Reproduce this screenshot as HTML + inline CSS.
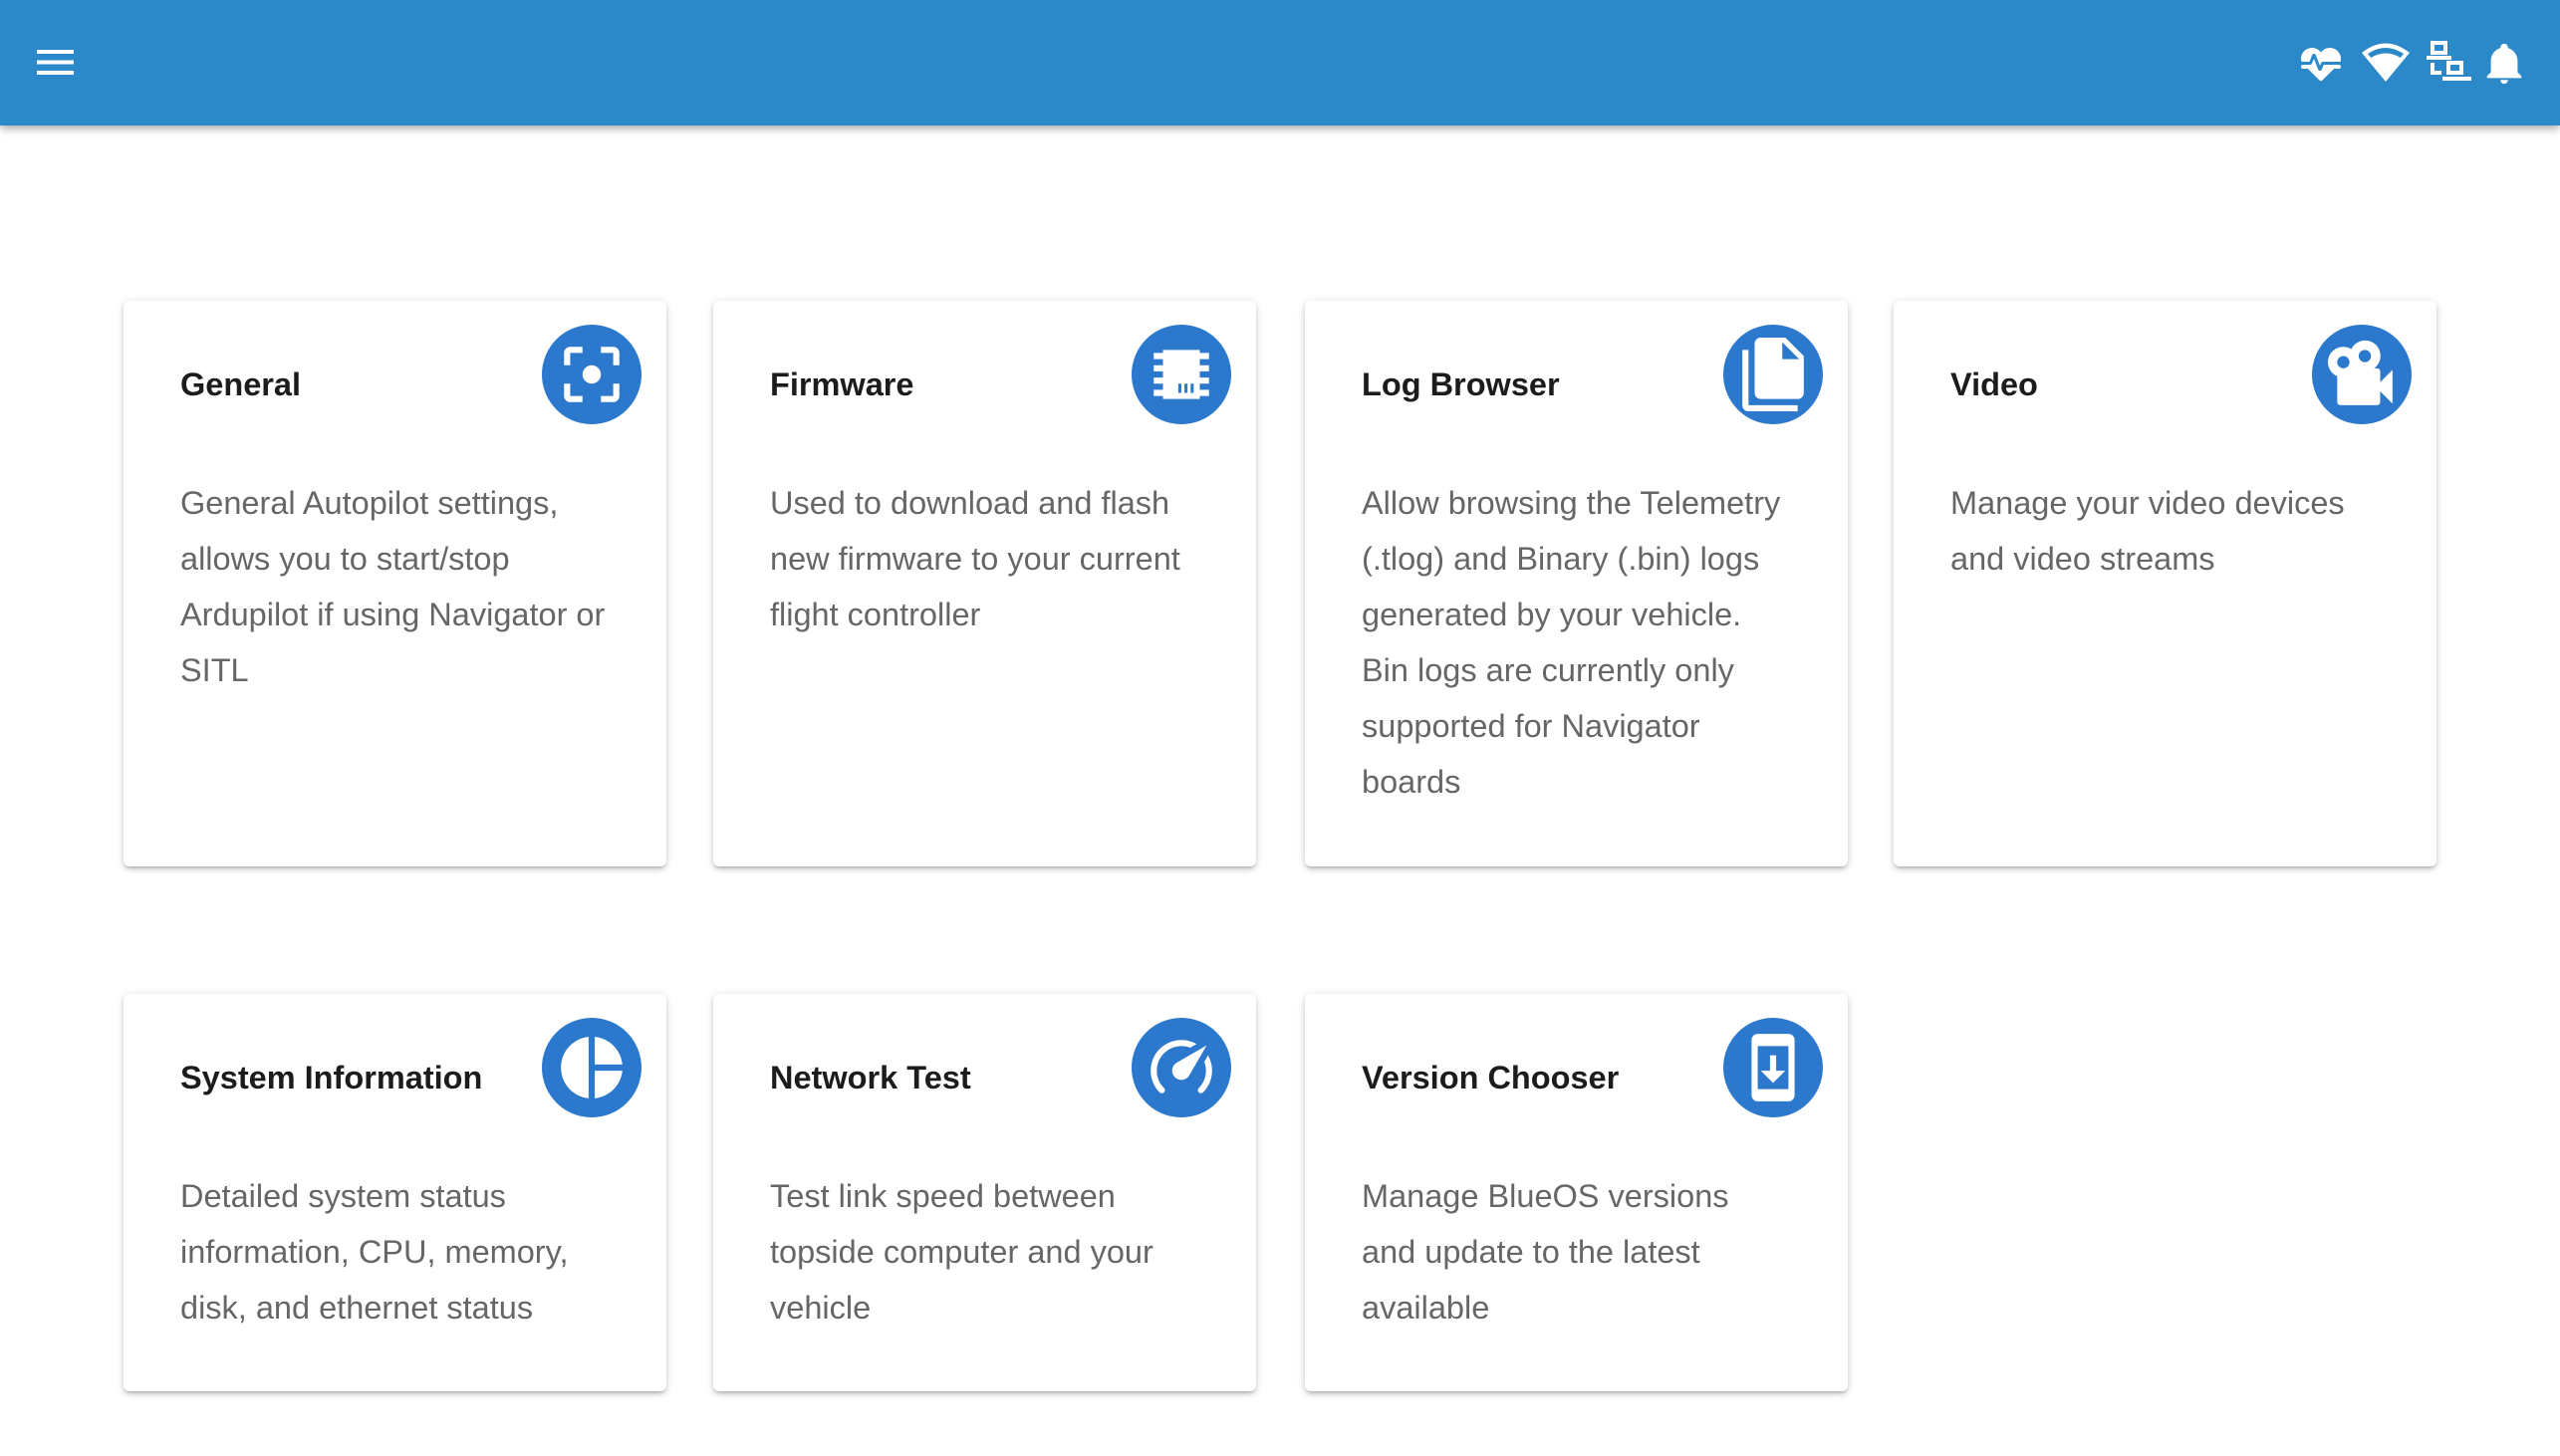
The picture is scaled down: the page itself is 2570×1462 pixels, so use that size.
<!DOCTYPE html>
<html><head><meta charset="utf-8">
<style>
*{margin:0;padding:0;box-sizing:border-box}
html,body{width:2570px;height:1462px;overflow:hidden;background:#fff;font-family:"Liberation Sans",Arial,sans-serif}
.hdr{position:absolute;left:0;top:0;width:2570px;height:126px;background:#2b89c9;box-shadow:0 3px 8px rgba(0,0,0,.35);z-index:2}
.hdr svg{position:absolute;fill:#fff}
.card{position:absolute;width:545px;background:#fff;border-radius:6px;box-shadow:0 3px 3px -2px rgba(0,0,0,.2),0 3px 6px 0 rgba(0,0,0,.14),0 1px 10px 0 rgba(0,0,0,.1)}
.r1{top:302px;height:568px}
.r2{top:998px;height:399px}
.t{position:absolute;left:57px;top:64px;font-size:32.5px;font-weight:bold;color:#1c1c1c;white-space:nowrap;line-height:40px}
.b{position:absolute;left:57px;top:175px;font-size:32.5px;color:#666;line-height:56px;white-space:nowrap}
.ic{position:absolute;left:420px;top:24px;width:100px;height:100px;border-radius:50%;background:#2b78cc}
.ic svg{position:absolute;left:13px;top:13px;width:74px;height:74px;fill:#fff}
</style></head><body>
<div class="hdr">
 <svg style="left:37px;top:50px" width="37" height="25" viewBox="0 0 37 25"><rect x="0" y="0" width="37" height="4"/><rect x="0" y="10.5" width="37" height="4"/><rect x="0" y="21" width="37" height="4"/></svg>
 <svg style="left:2306px;top:40px" width="48" height="48" viewBox="0 0 24 24"><path d="M7.5,4A5.5,5.5 0 0,0 2,9.5C2,10 2.09,10.5 2.22,11H6.3L7.57,7.63C7.87,6.83 9.05,6.75 9.43,7.63L11.5,13L12.09,11.58C12.22,11.25 12.57,11 13,11H21.78C21.91,10.5 22,10 22,9.5A5.5,5.5 0 0,0 16.5,4C14.64,4 13,4.930 12,6.34C11,4.93 9.36,4 7.5,4V4M3,12.5A1,1 0 0,0 2,13.5A1,1 0 0,0 3,14.5H5.44L11,20C12,20.9 12,20.9 13,20L18.56,14.5H21A1,1 0 0,0 22,13.5A1,1 0 0,0 21,12.5H13.4L12.47,14.8C12.070,15.81 10.92,15.67 10.55,14.83L8.5,9.5L7.54,11.83C7.39,12.21 7.05,12.5 6.6,12.5H3Z"/></svg>
 <svg style="left:2371px;top:42px" width="48" height="40" viewBox="0 0 48 40"><path d="M0,11 Q24,-8 48,11 L24,40 Z M6,12 L24,34 L42,12 Q24,0 6,12 Z" fill-rule="evenodd"/><path d="M9,16 Q24,7 39,16 L24,34 Z"/></svg>
 <svg style="left:2436px;top:41px" width="46" height="44" viewBox="0 0 46 44"><path d="M4,0H21V14H4Z M8,4V10H17V4Z M0,15H25V19H0Z M4,22H8V30H15V34H4Z M20,20H37V34H20Z M24,24V30H33V24Z M16,36H45V40H16Z" fill-rule="evenodd"/></svg>
 <svg style="left:2491px;top:40px" width="46" height="46" viewBox="0 0 24 24"><path d="M21,19V20H3V19L5,17V11C5,7.9 7.03,5.17 10,4.29C10,4.19 10,4.1 10,4A2,2 0 0,1 12,2A2,2 0 0,1 14,4C14,4.1 14,4.19 14,4.29C16.97,5.17 19,7.9 19,11V17L21,19M14,21A2,2 0 0,1 12,23A2,2 0 0,1 10,21"/></svg>
</div>

<div class="card r1" style="left:124px"><div class="t">General</div>
<div class="ic"><svg viewBox="0 0 24 24"><path d="M12,9A3,3 0 0,0 9,12A3,3 0 0,0 12,15A3,3 0 0,0 15,12A3,3 0 0,0 12,9M19,19H15V21H19A2,2 0 0,0 21,19V15H19M19,3H15V5H19V9H21V5A2,2 0 0,0 19,3M5,5H9V3H5A2,2 0 0,0 3,5V9H5M5,15H3V19A2,2 0 0,0 5,21H9V19H5V15Z"/></svg></div>
<div class="b">General Autopilot settings,<br>allows you to start/stop<br>Ardupilot if using Navigator or<br>SITL</div></div>

<div class="card r1" style="left:716px"><div class="t">Firmware</div>
<div class="ic"><svg viewBox="0 0 24 24"><path d="M6,4H18V5H21V7H18V9H21V11H18V13H21V15H18V17H21V19H18V20H6V19H3V17H6V15H3V13H6V11H3V9H6V7H3V5H6V4M11,15V18H12V15H11M13,15V18H14V15H13M15,15V18H16V15H15Z"/></svg></div>
<div class="b">Used to download and flash<br>new firmware to your current<br>flight controller</div></div>

<div class="card r1" style="left:1310px"><div class="t">Log Browser</div>
<div class="ic"><svg viewBox="0 0 24 24"><path d="M15,7H20.5L15,1.5V7M8,0H16L22,6V18A2,2 0 0,1 20,20H8C6.89,20 6,19.1 6,18V2A2,2 0 0,1 8,0M4,4V22H20V24H4A2,2 0 0,1 2,22V4H4Z"/></svg></div>
<div class="b">Allow browsing the Telemetry<br>(.tlog) and Binary (.bin) logs<br>generated by your vehicle.<br>Bin logs are currently only<br>supported for Navigator<br>boards</div></div>

<div class="card r1" style="left:1901px"><div class="t">Video</div>
<div class="ic"><svg viewBox="0 0 24 24"><path d="M18,14.5V11A1,1 0 0,0 17,10H16C18.24,8.39 18.76,5.27 17.15,3C15.54,0.78 12.42,0.26 10.17,1.87C9.5,2.35 8.96,3 8.6,3.73C6.25,2.28 3.17,3 1.72,5.37C0.28,7.72 1,10.8 3.36,12.25C3.57,12.37 3.780,12.5 4,12.58V21A1,1 0 0,0 5,22H17A1,1 0 0,0 18,21V17.5L22,21.5V10.5L18,14.5M13,4A2,2 0 0,1 15,6A2,2 0 0,1 13,8A2,2 0 0,1 11,6A2,2 0 0,1 13,4M6,6A2,2 0 0,1 8,8A2,2 0 0,1 6,10A2,2 0 0,1 4,8A2,2 0 0,1 6,6Z"/></svg></div>
<div class="b">Manage your video devices<br>and video streams</div></div>

<div class="card r2" style="left:124px"><div class="t">System Information</div>
<div class="ic"><svg viewBox="0 0 24 24"><path d="M11,2V22C5.9,21.5 2,17.2 2,12C2,6.8 5.9,2.5 11,2M13,2V11H22C21.5,6.2 17.8,2.5 13,2M13,13V22C17.7,21.5 21.5,17.8 22,13H13Z"/></svg></div>
<div class="b">Detailed system status<br>information, CPU, memory,<br>disk, and ethernet status</div></div>

<div class="card r2" style="left:716px"><div class="t">Network Test</div>
<div class="ic"><svg viewBox="0 0 24 24"><path d="M12,16A3,3 0 0,1 9,13C9,11.88 9.61,10.9 10.5,10.39L20.21,4.77L14.68,14.35C14.18,15.33 13.17,16 12,16M12,3C13.81,3 15.5,3.5 16.97,4.32L14.87,5.53C14,5.19 13,5 12,5A8,8 0 0,0 4,13C4,15.21 4.89,17.21 6.34,18.65H6.35C6.74,19.04 6.74,19.67 6.35,20.06C5.96,20.45 5.32,20.45 4.93,20.07V20.07C3.12,18.26 2,15.76 2,13A10,10 0 0,1 12,3M22,13C22,15.76 20.88,18.26 19.07,20.07V20.07C18.68,20.45 18.05,20.45 17.66,20.06C17.27,19.67 17.27,19.04 17.66,18.65V18.65C19.11,17.2 20,15.21 20,13C20,12 19.81,11 19.46,10.1L20.67,8C21.5,9.5 22,11.18 22,13Z"/></svg></div>
<div class="b">Test link speed between<br>topside computer and your<br>vehicle</div></div>

<div class="card r2" style="left:1310px"><div class="t">Version Chooser</div>
<div class="ic"><svg viewBox="0 0 24 24"><path d="M17,1H7A2,2 0 0,0 5,3V21A2,2 0 0,0 7,23H17A2,2 0 0,0 19,21V3A2,2 0 0,0 17,1M17,19H7V5H17V19M16,13H13V8H11V13H8L12,17L16,13Z"/></svg></div>
<div class="b">Manage BlueOS versions<br>and update to the latest<br>available</div></div>
</body></html>
